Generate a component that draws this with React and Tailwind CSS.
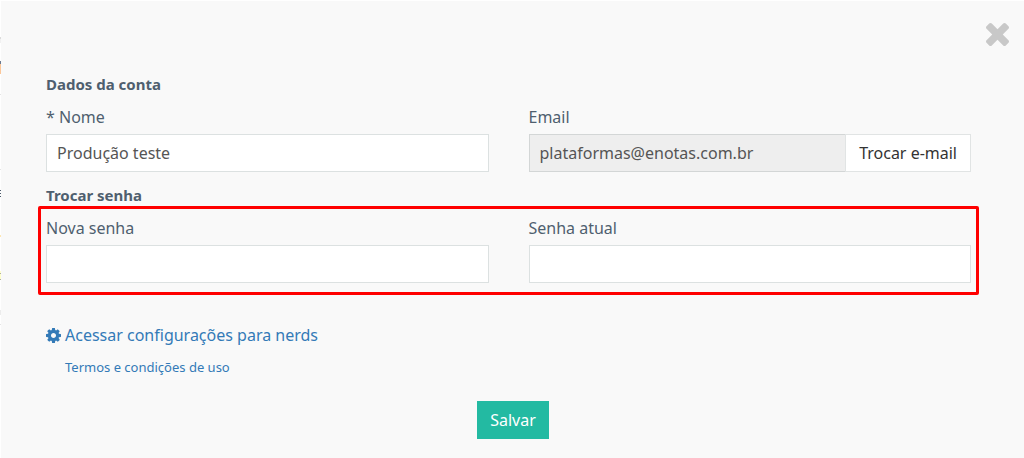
import clsx from "clsx";

// Slice of the page that stays visible next to the modal
const PAGE_EDGE = [
  { gap: "mt-[37px]", mark: "h-[2px] bg-[#dcdcdc]" },
  { gap: "mt-0", mark: "h-[4px] bg-[#f1f1f1]" },
  { gap: "mt-[18px]", mark: "h-[3px] bg-[#6b7a90]" },
  { gap: "mt-0", mark: "h-[10px] bg-[#fbc79a]" },
  { gap: "mt-[20px]", mark: "h-px bg-[#e4e4e4]" },
  { gap: "mt-[74px]", mark: "h-px bg-[#e4e4e4]" },
  { gap: "mt-[20px]", mark: "h-px bg-[#4a5a6a]" },
  { gap: "mt-[2px]", mark: "h-px bg-[#4a5a6a]" },
  { gap: "mt-[2px]", mark: "h-px bg-[#4a5a6a]" },
  { gap: "mt-[38px]", mark: "h-[2px] bg-[#fde7b5]" },
  { gap: "mt-[34px]", mark: "h-[2px] bg-[#ffffcc]" },
  { gap: "mt-0", mark: "h-px bg-[#b0b0a0]" },
  { gap: "mt-0", mark: "h-[5px] bg-[#ffffcc]" },
  { gap: "mt-0", mark: "h-px bg-[#b0b0a0]" },
  { gap: "mt-[30px]", mark: "h-[5px] bg-[#ececec]" },
  { gap: "mt-[9px]", mark: "h-px bg-[#e4e4e4]" },
];

const INPUT_CLASS =
  "block h-[38px] w-full min-w-0 border border-[#dce1e1] bg-white px-[10px] text-base text-[#555] outline-none";

const CloseIcon = () => (
  <svg viewBox="302 366 1188 1188" className="h-[23px] w-[23px]" fill="currentColor" aria-hidden="true">
    <path d="M1490 1322q0 40-28 68l-136 136q-28 28-68 28t-68-28l-294-294-294 294q-28 28-68 28t-68-28l-136-136q-28-28-28-68t28-68l294-294-294-294q-28-28-28-68t28-68l136-136q28-28 68-28t68 28l294 294 294-294q28-28 68-28t68 28l136 136q28 28 28 68t-28 68l-294 294 294 294q28 28 28 68z" />
  </svg>
);

const CogIcon = () => (
  <svg viewBox="0 -128 1536 1536" className="h-[15px] w-[15px]" fill="currentColor" aria-hidden="true">
    <path d="M1024 640q0-106-75-181t-181-75-181 75-75 181 75 181 181 75 181-75 75-181zm512-109v222q0 12-8 23t-20 13l-185 28q-19 54-39 91 35 50 107 138 10 12 10 25t-9 23q-27 37-99 108t-94 71q-12 0-26-9l-138-108q-44 23-91 38-16 136-29 186-7 28-36 28h-222q-14 0-24.5-8.5t-11.5-21.5l-28-184q-49-16-90-37l-141 107q-10 9-25 9-14 0-25-11-126-114-165-168-7-10-7-23 0-12 8-23 15-21 51-66.5t54-70.5q-27-50-41-99l-183-27q-13-2-21-12.5t-8-23.5v-222q0-12 8-23t19-13l186-28q14-46 39-92-40-57-107-138-10-12-10-24 0-10 9-23 26-36 98.5-107.5t94.5-71.5q13 0 26 10l138 107q44-23 91-38 16-136 29-186 7-28 36-28h222q14 0 24.5 8.5t11.5 21.5l28 184q49 16 90 37l142-107q9-9 24-9 13 0 25 10 129 119 165 170 7 8 7 22 0 12-8 23-15 21-51 66.5t-54 70.5q26 50 41 98l183 28q13 2 21 12.5t8 23.5z" />
  </svg>
);

const Field = ({ id, label, children }) => (
  <div className="min-w-0">
    <label htmlFor={id} className="mb-[5px] block leading-6">
      {label}
    </label>
    {children}
  </div>
);

const App = () => {
  return (
    <div className="flex min-h-screen bg-white font-['Noto_Sans','Open_Sans',sans-serif] text-base text-[#4f5f6f]">
      <div className="w-px shrink-0" aria-hidden="true">
        {PAGE_EDGE.map((item, index) => (
          <div key={index} className={clsx(item.gap, item.mark)} />
        ))}
      </div>

      <main className="mt-px min-w-0 flex-1 bg-[#f9f9f9]">
        <div className="flex justify-end pt-[22px] pr-[15px]">
          <button type="button" aria-label="Fechar" className="text-[#c8c8c8]">
            <CloseIcon />
          </button>
        </div>

        <form className="pt-[27px] pr-[53px] pb-4 pl-[45px]" onSubmit={(e) => e.preventDefault()}>
          {/* Account data */}
          <h2 className="text-[15px] leading-[22px] font-bold">Dados da conta</h2>
          <div className="mt-[10px] grid grid-cols-2 gap-10">
            <Field id="nome" label="* Nome">
              <input id="nome" type="text" defaultValue="Produção teste" className={INPUT_CLASS} />
            </Field>
            <Field id="email" label="Email">
              <div className="flex">
                <input
                  id="email"
                  type="email"
                  defaultValue="plataformas@enotas.com.br"
                  disabled
                  className="h-[38px] min-w-0 flex-1 border border-r-0 border-[#d3d6d6] bg-[#eee] px-[10px] text-base text-[#555]"
                />
                <button
                  type="button"
                  className="h-[38px] shrink-0 border border-[#e1e4e4] bg-white px-[13px] text-[#333]"
                >
                  Trocar e-mail
                </button>
              </div>
            </Field>
          </div>

          {/* Password change */}
          <h2 className="mt-3 text-[15px] leading-[22px] font-bold">Trocar senha</h2>
          <div className="-mx-2 grid grid-cols-2 gap-10 rounded-xs border-3 border-[#ff0000] px-[5px] pt-[7px] pb-[9px]">
            <Field id="nova-senha" label="Nova senha">
              <input id="nova-senha" type="password" className={INPUT_CLASS} />
            </Field>
            <Field id="senha-atual" label="Senha atual">
              <input id="senha-atual" type="password" className={INPUT_CLASS} />
            </Field>
          </div>

          <div className="mt-7 flex flex-col items-start text-[#337ab7]">
            <a href="#configuracoes" className="flex items-center gap-1 leading-6">
              <CogIcon />
              Acessar configurações para nerds
            </a>
            <a href="#termos" className="mt-[10px] ml-[19px] text-[13px] leading-5">
              Termos e condições de uso
            </a>
          </div>

          <div className="mt-6 flex justify-center pl-[9px]">
            <button type="submit" className="h-[38px] bg-[#23baa2] px-[13px] text-white">
              Salvar
            </button>
          </div>
        </form>
      </main>
    </div>
  );
};

export default App;
